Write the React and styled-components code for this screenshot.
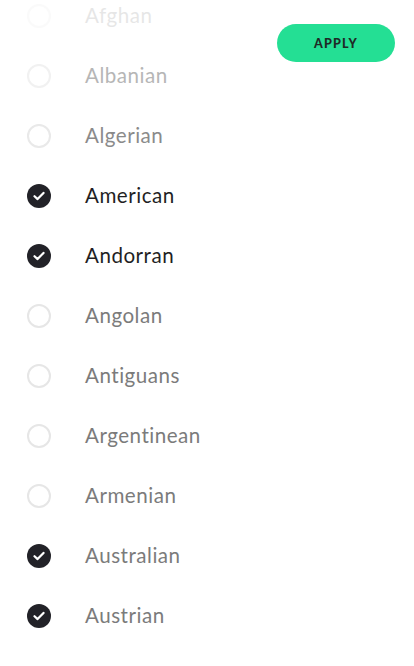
import React from "react";
import styled, {createGlobalStyle} from 'styled-components';

const GlobalStyle = createGlobalStyle`
    html, body {
        margin: 0;
        padding: 0;
        background: #ffffff;
        overflow: hidden;
    }
    body {
        font-family: "Lato", "Liberation Sans", sans-serif;
    }
`

const Screen = styled.div`
    position: relative;
    width: 414px;
    height: 666px;
    overflow: hidden;
    background: #ffffff;
`

const List = styled.ul`
    list-style: none;
    margin: -14px 0 0 0;
    padding: 0;
`

const Row = styled.li`
    height: 60px;
    display: flex;
    align-items: center;
    padding-left: 27px;
    opacity: ${props => props.fade};
`

const Check = styled.span`
    width: 24px;
    height: 24px;
    box-sizing: border-box;
    border-radius: 50%;
    display: flex;
    align-items: center;
    justify-content: center;
    flex-shrink: 0;
    background: ${props => props.checked ? "#222228" : "#ffffff"};
    border: ${props => props.checked ? "none" : "2px solid #e6e6e6"};
`

const Label = styled.span`
    margin-left: 34px;
    margin-bottom: 3px;
    font-size: 20.6px;
    letter-spacing: 0.5px;
    color: ${props => props.checked && props.dark ? "#1f1f24" : "#7b7b7b"};
`

const ApplyButton = styled.button`
    position: absolute;
    top: 24px;
    right: 19px;
    width: 118px;
    height: 38px;
    border: 0;
    border-radius: 19px;
    background: #24df94;
    color: #1f2a26;
    font-family: "Lato", "Liberation Sans", sans-serif;
    font-weight: 900;
    font-size: 12.5px;
    letter-spacing: 1.2px;
    padding: 0;
`

const countries = [
    {name: "Afghan", fade: 0.18},
    {name: "Albanian", fade: 0.55},
    {name: "Algerian", fade: 0.88},
    {name: "American", checked: true, dark: true},
    {name: "Andorran", checked: true, dark: true},
    {name: "Angolan"},
    {name: "Antiguans"},
    {name: "Argentinean"},
    {name: "Armenian"},
    {name: "Australian", checked: true},
    {name: "Austrian", checked: true},
]

function Tick() {
    return (
        <svg width="12" height="10" viewBox="0 0 12 10">
            <path d="M1.5 5.2 L4.6 8.1 L10.5 1.9" fill="none" stroke="#ffffff" strokeWidth="2.2" strokeLinecap="round" strokeLinejoin="round"/>
        </svg>
    )
}

function App() {
    return (
        <Screen>
            <GlobalStyle/>
            <List>
                {countries.map(c => (
                    <Row key={c.name} fade={c.fade || 1}>
                        <Check checked={c.checked}>{c.checked && <Tick/>}</Check>
                        <Label checked={c.checked} dark={c.dark}>{c.name}</Label>
                    </Row>
                ))}
            </List>
            <ApplyButton>APPLY</ApplyButton>
        </Screen>
    );
}

export default App;
